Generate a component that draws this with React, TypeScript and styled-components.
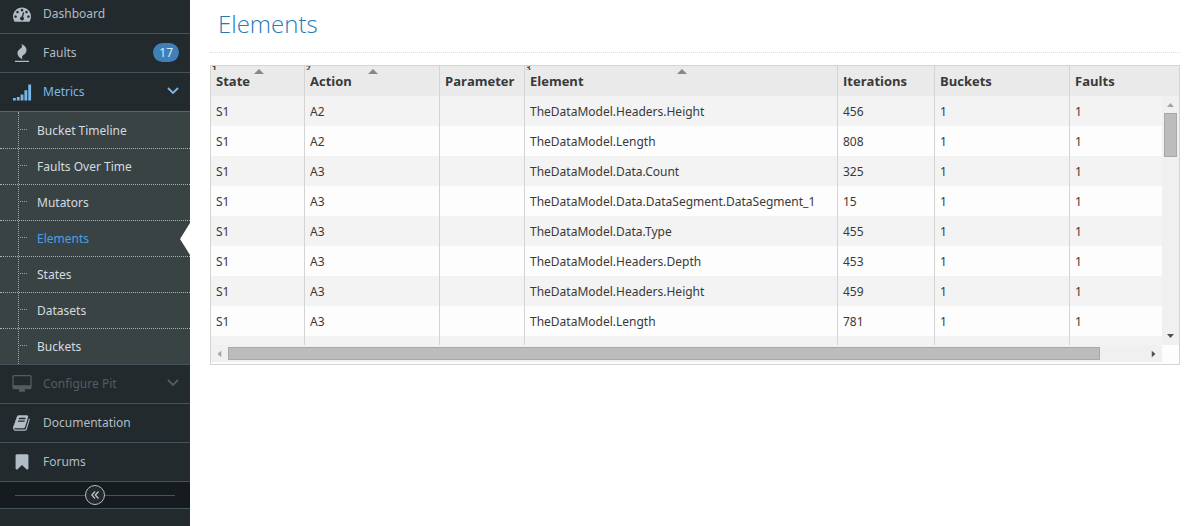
import React from "react";
import styled, { createGlobalStyle, css } from "styled-components";

const GlobalStyle = createGlobalStyle`
  *, *::before, *::after { box-sizing: border-box; }
  body {
    margin: 0;
    background: #fff;
    color: #393939;
    font: 12px/20px "Noto Sans", "Open Sans", sans-serif;
  }
`;

const Page = styled.div`
  display: flex;
  height: 100vh;
  overflow: hidden;
`;

const Sidebar = styled.nav`
  flex: 0 0 190px;
  overflow: hidden;
  background: #222a2d;
`;

const Menu = styled.ul`
  list-style: none;
  margin: -5px 0 0;
  padding: 0;
`;

const MenuItem = styled.li`
  border-bottom: 1px solid #44535a;
`;

const MenuLink = styled.a<{ $active?: boolean; $disabled?: boolean }>`
  display: flex;
  align-items: center;
  height: 38px;
  padding: 0 11px 0 13px;
  color: ${(p) => (p.$active ? "#7ab8ec" : p.$disabled ? "#555c60" : "#b2bcc4")};
  text-decoration: none;
`;

const MenuText = styled.span`
  flex: 1;
  margin-left: 12px;
`;

const Icon = styled.svg`
  flex: none;
  width: 18px;
  height: 18px;
  overflow: visible;
  fill: currentColor;
`;

const Chevron = styled.svg`
  width: 12px;
  height: 8px;
  margin-bottom: 2px;
  fill: none;
  stroke: currentColor;
  stroke-width: 1.8;
`;

const Badge = styled.span`
  margin-bottom: 1px;
  padding: 0 6px;
  border-radius: 10px;
  background: #3f80b8;
  color: #dfe9f1;
  line-height: 19px;
`;

const SubMenu = styled.ul`
  position: relative;
  list-style: none;
  margin: 0;
  padding: 1px 0 0;
  border-top: 1px solid #5a6568;
  background: #3a4343;

  &::before {
    content: "";
    position: absolute;
    top: 0;
    bottom: 0;
    left: 18px;
    border-left: 1px dotted #9aa5ab;
  }
`;

const SubItem = styled.li`
  & + & { border-top: 1px dotted #a6b4bc; }
`;

const SubLink = styled.a<{ $active?: boolean }>`
  position: relative;
  display: block;
  padding: 8px 0 7px 37px;
  color: ${(p) => (p.$active ? "#4b9fe2" : "#d3dbe0")};
  text-decoration: none;

  &::before {
    content: "";
    position: absolute;
    top: 16px;
    left: 20px;
    width: 7px;
    border-top: 1px dotted #9aa5ab;
  }

  ${(p) => p.$active && css`
    &::after {
      content: "";
      position: absolute;
      top: 2px;
      right: 0;
      border: solid transparent;
      border-width: 16px 10px 16px 0;
      border-right-color: #fff;
    }
  `}
`;

const Collapse = styled.div`
  display: flex;
  align-items: center;
  height: 27px;
  padding: 0 15px;
  border-bottom: 1px solid #44535a;
  background: #151b1e;

  &::before, &::after {
    content: "";
    flex: 1;
    border-top: 1px solid #44535a;
  }
`;

const CollapseButton = styled.button`
  display: grid;
  place-items: center;
  width: 20px;
  height: 20px;
  padding: 0;
  border: 1px solid #b8bdc0;
  border-radius: 50%;
  background: #222a2d;
  color: #c0c5c8;

  svg { width: 8px; height: 8px; fill: none; stroke: currentColor; stroke-width: 1.3; }
`;

const Main = styled.main`
  flex: 1;
  min-width: 0;
  padding: 8px 9px 0 20px;
`;

const Title = styled.h1`
  margin: 0 0 12px;
  padding: 0 8px 13px;
  border-bottom: 1px dotted #dcdcdc;
  color: #2679b5;
  font-family: "Open Sans", "Noto Sans", sans-serif;
  font-size: 24px;
  font-weight: 300;
  line-height: 31px;
`;

const GridBox = styled.section`
  padding-bottom: 2px;
  border: 1px solid #d4d4d4;
  background: #fdfdfd;
`;

const GridBody = styled.div`
  display: flex;
  height: 279px;
`;

const Viewport = styled.div`
  flex: 1;
  min-width: 0;
  overflow: hidden;
`;

const Table = styled.table`
  width: 100%;
  table-layout: fixed;
  border-collapse: separate;
  border-spacing: 0;
`;

const cell = css`
  height: 30px;
  padding: 0 5px;
  border-right: 1px solid #d4d4d4;
  text-align: left;
  white-space: nowrap;
  &:last-child { border-right: 0; }
`;

const HeadCell = styled.th`
  ${cell}
  position: relative;
  background: #eaeaea;
  font-family: "Open Sans", "Noto Sans", sans-serif;
  font-size: 13px;
  font-weight: 700;
`;

const Order = styled.span`
  position: absolute;
  top: 0;
  left: 1px;
  height: 4px;
  overflow: hidden;
  font-size: 8px;
  line-height: 3px;
`;

const SortArrow = styled.span`
  position: absolute;
  top: 3px;
  left: 50%;
  margin-left: -4px;
  border: solid transparent;
  border-width: 0 5px 5px;
  border-bottom-color: #888;
`;

const Row = styled.tr`
  background: #fdfdfd;
  &:nth-child(odd) { background: #f3f3f3; }
`;

const Cell = styled.td`
  ${cell}
  padding-top: 2px;
`;

const VerticalBar = styled.div`
  display: flex;
  flex-direction: column;
  align-items: center;
  flex: 0 0 17px;
  padding-bottom: 7px;
  border-top: 30px solid #eaeaea;
  background: #f0f0f0;
`;

const HorizontalBar = styled.div`
  display: flex;
  align-items: center;
  height: 17px;
  margin-right: 17px;
  padding: 0 6px;
  background: #f0f0f0;
`;

const VerticalThumb = styled.div`
  width: 13px;
  height: 44px;
  margin: 6px 0 auto;
  border: 1px solid #a8a8a8;
  background: #bcbcbc;
`;

const HorizontalThumb = styled.div`
  flex: 0 1 872px;
  height: 13px;
  margin: 0 auto 0 6px;
  border: 1px solid #a8a8a8;
  background: #bcbcbc;
`;

const turns = { up: 0, right: 90, down: 180, left: 270 };

const Arrow = styled.svg<{ $dir: keyof typeof turns; $dim?: boolean }>`
  flex: none;
  width: 7px;
  height: 4px;
  margin: ${(p) => (p.$dir === "up" ? "7px 0 0" : p.$dir === "down" ? "0" : "0 -1px")};
  fill: ${(p) => (p.$dim ? "#a3a3a3" : "#505050")};
  transform: rotate(${(p) => turns[p.$dir]}deg);
`;

const ScrollArrow = ({ dir, dim }: { dir: keyof typeof turns; dim?: boolean }) => (
  <Arrow $dir={dir} $dim={dim} viewBox="0 0 7 4" aria-hidden="true">
    <path d="M0 4L3.5 0L7 4z" />
  </Arrow>
);

const icons = {
  dashboard:
    "M384 1152q0-53-37.5-90.5t-90.5-37.5-90.5 37.5-37.5 90.5 37.5 90.5 90.5 37.5 90.5-37.5 37.5-90.5zm192-448q0-53-37.5-90.5t-90.5-37.5-90.5 37.5-37.5 90.5 37.5 90.5 90.5 37.5 90.5-37.5 37.5-90.5zm428 481l101-382q6-26-7.5-48.5t-38.5-29.5-48 6.5-30 39.5l-101 382q-60 5-107 43.5t-63 98.5q-20 77 20 146t117 89 146-20 89-117q16-60-6-117t-72-91zm660-33q0-53-37.5-90.5t-90.5-37.5-90.5 37.5-37.5 90.5 37.5 90.5 90.5 37.5 90.5-37.5 37.5-90.5zm-640-640q0-53-37.5-90.5t-90.5-37.5-90.5 37.5-37.5 90.5 37.5 90.5 90.5 37.5 90.5-37.5 37.5-90.5zm448 192q0-53-37.5-90.5t-90.5-37.5-90.5 37.5-37.5 90.5 37.5 90.5 90.5 37.5 90.5-37.5 37.5-90.5zm320 448q0 261-141 483-19 29-54 29h-1402q-35 0-54-29-141-221-141-483 0-182 71-348t191-286 286-191 348-71 348 71 286 191 191 286 71 348z",
  fire:
    "M1600 1696v64q0 13-9.5 22.5t-22.5 9.5h-1344q-13 0-22.5-9.5t-9.5-22.5v-64q0-13 9.5-22.5t22.5-9.5h1344q13 0 22.5 9.5t9.5 22.5zm-256-1056q0 78-24.5 144t-64 112.5-87.5 88-96 77.5-87.5 72-64 81.5-24.5 96.5q0 96 67 224l-4-1 1 1q-90-41-160-83t-138.5-100-113.5-122.5-72.5-150.5-27.5-184q0-78 24.5-144t64-112.5 87.5-88 96-77.5 87.5-72 64-81.5 24.5-96.5q0-94-66-224l3 1-1-1q90 41 160 83t138.5 100 113.5 122.5 72.5 150.5 27.5 184z",
  signal:
    "M0 1500h280v240h-280zM380 1400h280v340h-280zM760 1150h280v590h-280zM1140 720h280v1020h-280zM1520 160h280v1580h-280z",
  desktop:
    "M1728 992v-832q0-13-9.5-22.5t-22.5-9.5h-1600q-13 0-22.5 9.5t-9.5 22.5v832q0 13 9.5 22.5t22.5 9.5h1600q13 0 22.5-9.5t9.5-22.5zm128-832v1088q0 66-47 113t-113 47h-544q0 37 16 77.5t32 71 16 43.5q0 26-19 45t-45 19h-512q-26 0-45-19t-19-45q0-14 16-44t32-70 16-78h-544q-66 0-113-47t-47-113v-1088q0-66 47-113t113-47h1600q66 0 113 47t47 113z",
  book:
    "M1639 478q40 57 18 129l-275 906q-19 64-76.5 107.5t-122.5 43.5h-923q-77 0-148.5-53.5t-99.5-131.5q-24-67-2-127 0-4 3-27t4-37q1-8-3-21.5t-3-19.5q2-11 8-21t16.5-23.5 16.5-23.5q23-38 45-91.5t30-91.5q3-10 .5-30t-.5-28q3-11 17-28t17-23q21-36 42-92t25-90q1-9-2.5-32t.5-28q4-13 22-30.5t22-22.5q19-26 42.5-84.5t27.5-96.5q1-8-3-25.5t-2-26.5q2-8 9-18t18-23 17-21q8-12 16.5-30.5t15-35 16-36 19.5-32 26.5-23.5 36-11.5 47.5 5.5l-1 3q38-9 51-9h761q74 0 114 56t18 130l-274 906q-36 119-71.5 153.5t-128.5 34.5h-869q-27 0-38 15-11 16-1 43 24 70 144 70h923q29 0 56-15.5t35-41.5l300-987q7-22 5-57 38 15 59 43zm-1064 2q-4 13 2 22.5t20 9.5h608q13 0 25.5-9.5t16.5-22.5l21-64q4-13-2-22.5t-20-9.5h-608q-13 0-25.5 9.5t-16.5 22.5zm-83 256q-4 13 2 22.5t20 9.5h608q13 0 25.5-9.5t16.5-22.5l21-64q4-13-2-22.5t-20-9.5h-608q-13 0-25.5 9.5t-16.5 22.5z",
  bookmark:
    "M1420 128q23 0 44 9 33 13 52.5 41t19.5 62v1289q0 34-19.5 62t-52.5 41q-19 8-44 8-48 0-83-32l-441-424-441 424q-36 33-83 33-23 0-44-9-33-13-52.5-41t-19.5-62v-1289q0-34 19.5-62t52.5-41q21-9 44-9h1048z",
};

type NavProps = {
  icon: keyof typeof icons;
  label: string;
  active?: boolean;
  disabled?: boolean;
  expandable?: boolean;
  badge?: number;
  children?: React.ReactNode;
};

const NavEntry = ({ icon, label, active, disabled, expandable, badge, children }: NavProps) => (
  <MenuItem>
    <MenuLink href="#" $active={active} $disabled={disabled} aria-disabled={disabled}>
      <Icon viewBox="0 0 1792 1792" aria-hidden="true"><path d={icons[icon]} /></Icon>
      <MenuText>{label}</MenuText>
      {badge !== undefined && <Badge>{badge}</Badge>}
      {expandable && <Chevron viewBox="0 0 12 8" aria-hidden="true"><path d="M1 1L6 6L11 1" /></Chevron>}
    </MenuLink>
    {children}
  </MenuItem>
);

const subPages = ["Bucket Timeline", "Faults Over Time", "Mutators", "Elements", "States", "Datasets", "Buckets"];

const columns: { name: string; width?: number; order?: number }[] = [
  { name: "State", width: 94, order: 1 },
  { name: "Action", width: 135, order: 2 },
  { name: "Parameter", width: 85 },
  { name: "Element", order: 3 },
  { name: "Iterations", width: 97 },
  { name: "Buckets", width: 135 },
  { name: "Faults", width: 92 },
];

const rows = [
  ["S1", "A2", "", "TheDataModel.Headers.Height", "456", "1", "1"],
  ["S1", "A2", "", "TheDataModel.Length", "808", "1", "1"],
  ["S1", "A3", "", "TheDataModel.Data.Count", "325", "1", "1"],
  ["S1", "A3", "", "TheDataModel.Data.DataSegment.DataSegment_1", "15", "1", "1"],
  ["S1", "A3", "", "TheDataModel.Data.Type", "455", "1", "1"],
  ["S1", "A3", "", "TheDataModel.Headers.Depth", "453", "1", "1"],
  ["S1", "A3", "", "TheDataModel.Headers.Height", "459", "1", "1"],
  ["S1", "A3", "", "TheDataModel.Length", "781", "1", "1"],
  ["", "", "", "", "", "", ""],
];

export default function App() {
  return (
    <Page>
      <GlobalStyle />
      <Sidebar>
        <Menu>
          <NavEntry icon="dashboard" label="Dashboard" />
          <NavEntry icon="fire" label="Faults" badge={17} />
          <NavEntry icon="signal" label="Metrics" active expandable>
            <SubMenu>
              {subPages.map((name) => (
                <SubItem key={name}>
                  <SubLink href="#" $active={name === "Elements"}>{name}</SubLink>
                </SubItem>
              ))}
            </SubMenu>
          </NavEntry>
          <NavEntry icon="desktop" label="Configure Pit" disabled expandable />
          <NavEntry icon="book" label="Documentation" />
          <NavEntry icon="bookmark" label="Forums" />
        </Menu>
        <Collapse>
          <CollapseButton type="button" aria-label="Collapse sidebar">
            <svg viewBox="0 0 8 8" aria-hidden="true"><path d="M4 .5L.8 4L4 7.5M7.5 .5L4.3 4L7.5 7.5" /></svg>
          </CollapseButton>
        </Collapse>
      </Sidebar>
      <Main>
        <Title>Elements</Title>
        <GridBox>
          <GridBody>
            <Viewport>
              <Table>
                <colgroup>
                  {columns.map((c) => <col key={c.name} width={c.width} />)}
                </colgroup>
                <thead>
                  <tr>
                    {columns.map((c) => (
                      <HeadCell key={c.name} scope="col">
                        {c.order && <Order>{c.order}</Order>}
                        {c.name}
                        {c.order && <SortArrow />}
                      </HeadCell>
                    ))}
                  </tr>
                </thead>
                <tbody>
                  {rows.map((row, i) => (
                    <Row key={i}>
                      {row.map((value, j) => <Cell key={j}>{value}</Cell>)}
                    </Row>
                  ))}
                </tbody>
              </Table>
            </Viewport>
            <VerticalBar>
              <ScrollArrow dir="up" dim />
              <VerticalThumb />
              <ScrollArrow dir="down" />
            </VerticalBar>
          </GridBody>
          <HorizontalBar>
            <ScrollArrow dir="left" dim />
            <HorizontalThumb />
            <ScrollArrow dir="right" />
          </HorizontalBar>
        </GridBox>
      </Main>
    </Page>
  );
}
